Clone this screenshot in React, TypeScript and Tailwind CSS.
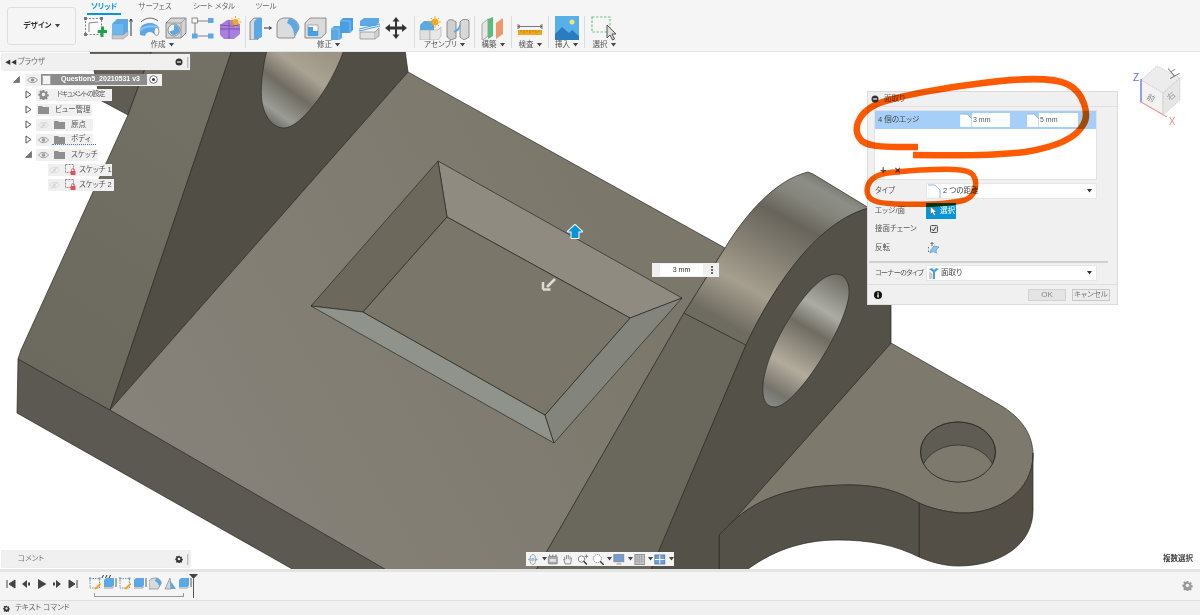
import React from "react";

const Caret = () => (
  <svg width="5" height="4" viewBox="0 0 5 4" className="inline-block ml-[3px] align-middle shrink-0">
    <path d="M0 0H5L2.5 3.5Z" fill="#444" />
  </svg>
);

const S = ({ children, w = 24, h = 24 }: { children: React.ReactNode; w?: number; h?: number }) => (
  <svg width={w} height={h} viewBox={`0 0 ${w} ${h}`} className="shrink-0">
    {children}
  </svg>
);

/* ---------- toolbar icons ---------- */
const ISketch = () => (
  <S>
    <rect x="2.5" y="2.5" width="16" height="16" fill="#fafafa" stroke="#666" strokeWidth="0.8" strokeDasharray="2 1.5" />
    <path d="M6 16V7L15 6" fill="none" stroke="#888" strokeWidth="1" />
    <rect x="1" y="1" width="3" height="3" fill="#777" />
    <rect x="17" y="1" width="3" height="3" fill="#777" />
    <rect x="1" y="17" width="3" height="3" fill="#777" />
    <path d="M16 14h3v-3.500h3V14h-.5h3.500v3h-3.500v4h-3v-4h-3z" fill="#1fa14a" transform="translate(-1 0)" />
  </S>
);
const IExtrude = () => (
  <S>
    <path d="M2 8L7 3H18V19L13 23H2Z" fill="#5aa9e6" />
    <path d="M2 8H13V23H2Z" fill="#6db7ef" />
    <path d="M2 19H13L18 15V19L13 23H2Z" fill="#c9c9c9" stroke="#888" strokeWidth="0.4" />
    <path d="M21 20V3M19.500 5.500L21 3L22.500 5.500" fill="none" stroke="#333" strokeWidth="1" />
  </S>
);
const IRevolve = () => (
  <S>
    <path d="M3 15C3 9 8 7 13 7C17 7 21 9 22 12L17 18C15 15 9 15 8 20L3 19Z" fill="#5aa9e6" />
    <path d="M3 15C6 10 17 9 22 12" fill="none" stroke="#8cc6f2" strokeWidth="2" />
    <ellipse cx="19.500" cy="15.500" rx="2.500" ry="4" fill="#f2f2f2" stroke="#777" strokeWidth="0.7" />
    <path d="M4 6C9 1 16 1 21 5" fill="none" stroke="#444" strokeWidth="0.8" />
  </S>
);
const IHole = () => (
  <S>
    <path d="M2 7L7 2H22V17L17 22H2Z" fill="#d4d4d4" stroke="#777" strokeWidth="0.8" />
    <path d="M2 7H17V22M17 7L22 2" fill="none" stroke="#888" strokeWidth="0.7" />
    <circle cx="10" cy="14" r="6" fill="#f4f4f4" stroke="#777" strokeWidth="0.8" />
    <path d="M10 14V9A5 5 0 1 1 5.500 15.500Z" fill="#5aa9e6" />
  </S>
);
const INodes = () => (
  <S>
    <path d="M4 5H20M4 5V20M4 20H20" fill="none" stroke="#777" strokeWidth="0.9" />
    <rect x="1" y="2" width="5.500" height="5" fill="#f5f5f5" stroke="#777" strokeWidth="0.8" />
    <rect x="17" y="2" width="5.500" height="5" fill="#5aa9e6" />
    <rect x="1" y="17.500" width="5.500" height="5" fill="#5aa9e6" />
    <rect x="17" y="17.500" width="5.500" height="5" fill="#5aa9e6" />
  </S>
);
const IPurple = () => (
  <S>
    <path d="M2 9L9 4H18L22 9V18L16 23H6L2 19Z" fill="#a87fdc" />
    <path d="M2 13H22M11 4V23M2 9L14 10L22 9" fill="none" stroke="#7d55b5" strokeWidth="1" />
    <circle cx="17.500" cy="6" r="3" fill="#f6a81c" />
    <path d="M17.500 0V2M17.500 10V12M11.500 6H13.500M21.500 6H23.500M13.500 2L15 3.500M20 8.500L21.500 10M13.500 10L15 8.500M20 3.500L21.500 2" stroke="#f6a81c" strokeWidth="1" />
  </S>
);
const IPress = () => (
  <S>
    <path d="M1 6L5 2H12V20L8 24H1Z" fill="#d9d9d9" stroke="#777" strokeWidth="0.8" />
    <path d="M5 6L8 2H13V21L9 23H5Z" fill="#5aa9e6" />
    <path d="M15 12H22M20 10.500L22.500 12L20 13.500" fill="none" stroke="#333" strokeWidth="1" />
  </S>
);
const IFillet = () => (
  <S>
    <path d="M1 21V9C1 5 4 2 9 2H14C20 3 23 8 23 12L18 22H3Z" fill="#dcdcdc" stroke="#777" strokeWidth="0.8" />
    <path d="M13 2C19 3 23 8 23 13L18 20C18 14 16 9 11 7Z" fill="#5aa9e6" />
  </S>
);
const IShell = () => (
  <S>
    <path d="M2 7L7 2H23V17L18 22H2Z" fill="#dadada" stroke="#777" strokeWidth="0.8" />
    <path d="M5 9H15V19H5Z" fill="#f6f6f6" stroke="#888" strokeWidth="0.6" />
    <path d="M5 11H10V15H15V20H5Z" fill="#4a9fe2" />
  </S>
);
const ICombine = () => (
  <S>
    <path d="M1 13L4 10H12V22L9 24H1Z" fill="#5aa9e6" />
    <path d="M10 5L13 2H23V14L20 17H10Z" fill="#4a9fe2" />
    <path d="M10 5H20V17" fill="none" stroke="#8cc6f2" strokeWidth="0.8" />
    <path d="M1 13H9V24" fill="none" stroke="#8cc6f2" strokeWidth="0.8" />
  </S>
);
const IOffset = () => (
  <S>
    <path d="M3 5L7 2H22V7L18 10H3Z" fill="#5aa9e6" />
    <path d="M2 13L23 8" stroke="#4a9fe2" strokeWidth="1" />
    <path d="M2 15L23 10" stroke="#4a9fe2" strokeWidth="1" />
    <path d="M3 16H18V23H3Z" fill="#e2e2e2" stroke="#888" strokeWidth="0.7" />
    <path d="M18 16L22 12V20L18 23" fill="#d0d0d0" stroke="#888" strokeWidth="0.7" />
  </S>
);
const IMove = () => (
  <S>
    <path d="M12 1L15.500 5.500H13V10.500H18V8L23 12L18 16V13.500H13V18.500H15.500L12 23L8.500 18.500H11V13.500H6V16L1 12L6 8V10.500H11V5.500H8.500Z" fill="#333" />
  </S>
);
const IAsmNew = () => (
  <S>
    <path d="M1 9L5 5H15V14H1Z" fill="#5aa9e6" />
    <path d="M1 14H11V24H1Z" fill="#e0e0e0" stroke="#999" strokeWidth="0.5" />
    <path d="M11 14H19L22 11V20L19 24H11Z" fill="#e8e8e8" stroke="#999" strokeWidth="0.5" />
    <circle cx="16" cy="6" r="3.500" fill="#f6a81c" />
    <path d="M16 0V2M16 10V12M10 6H12M20 6H22M12 2L13 3M19 9L20 10M12 10L13 9M19 3L20 2" stroke="#f6a81c" strokeWidth="1" />
  </S>
);
const IJoint = () => (
  <S>
    <path d="M1 7C1 4 4 3 7 4L10 6V22L5 24L1 21Z" fill="#cfcfcf" stroke="#777" strokeWidth="0.8" />
    <path d="M23 5C22 3 18 3 16 4L14 6V21L18 24L23 21Z" fill="#d8d8d8" stroke="#777" strokeWidth="0.8" />
    <path d="M8 16L13 12L14 9L12 14Z" fill="#5aa9e6" stroke="#5aa9e6" strokeWidth="1.500" />
  </S>
);
const IConstruct = () => (
  <S>
    <path d="M1 8L7 3V20L2 24H1Z" fill="#e5e5e5" stroke="#888" strokeWidth="0.7" />
    <path d="M7 3L12 1V20L7 23Z" fill="#5bbb7b" />
    <path d="M15 7L22 2V18L15 23Z" fill="#ec9a6a" />
  </S>
);
const IRuler = () => (
  <S w={26}>
    <path d="M1 8V13M25 8V13M1 10.500H25" fill="none" stroke="#555" strokeWidth="0.8" />
    <path d="M3 9L1 10.500L3 12M23 9L25 10.500L23 12" fill="none" stroke="#555" strokeWidth="0.8" />
    <rect x="1" y="14" width="24" height="5" fill="#f0a51d" />
    <path d="M4 14V16M7 14V17M10 14V16M13 14V17M16 14V16M19 14V17M22 14V16" stroke="#a06f10" strokeWidth="0.6" />
  </S>
);
const IPicture = () => (
  <S w={26} h={26}>
    <rect x="1" y="1" width="24" height="24" fill="#58b0e8" />
    <circle cx="18" cy="7" r="2.500" fill="#f6e27a" />
    <path d="M1 25V19L8 12L15 18L18 15L25 21V25Z" fill="#2a7cc0" />
  </S>
);
const ISelect = () => (
  <S w={26} h={26}>
    <rect x="1" y="2" width="18" height="15" fill="none" stroke="#6cc585" strokeWidth="1.200" strokeDasharray="2.500 1.500" />
    <path d="M16 10L16 23L19 20L21.500 25L23.500 24L21 19L25 19Z" fill="#ddd" stroke="#444" strokeWidth="0.9" />
  </S>
);

/* ---------- tree icons ---------- */
const Eye = ({ off }: { off?: boolean }) => (
  <svg width="11" height="8" viewBox="0 0 11 8" className="shrink-0">
    <path d="M0.500 4C3 0.500 8 0.500 10.500 4C8 7.500 3 7.500 0.500 4Z" fill="none" stroke={off ? "#dcdcdc" : "#9a9a9a"} strokeWidth="1" />
    <circle cx="5.500" cy="4" r="1.800" fill={off ? "#dcdcdc" : "#9a9a9a"} />
    {off && <path d="M2 7.500L9 0.500" stroke="#d0d0d0" strokeWidth="1" />}
  </svg>
);
const Folder = () => (
  <svg width="11" height="9" viewBox="0 0 11 9" className="shrink-0">
    <path d="M0 1H4L5 2H11V9H0Z" fill="#8f8f8f" />
  </svg>
);
const Expander = () => (
  <svg width="7" height="9" viewBox="0 0 7 9" className="shrink-0">
    <path d="M1 1L6 4.500L1 8Z" fill="#fff" stroke="#555" strokeWidth="1" />
  </svg>
);
const Corner = () => (
  <svg width="7" height="7" viewBox="0 0 7 7" className="shrink-0">
    <path d="M0.500 6.500L6.500 0.500V6.500Z" fill="#777" stroke="#555" strokeWidth="0.6" />
  </svg>
);
const SketchLock = () => (
  <svg width="11" height="11" viewBox="0 0 11 11" className="shrink-0">
    <rect x="0.500" y="0.500" width="8" height="8" fill="none" stroke="#666" strokeWidth="0.7" strokeDasharray="2 1" />
    <rect x="5.500" y="7" width="5" height="4" fill="#e0525a" />
    <path d="M6.500 7V6A1.500 1.500 0 0 1 9.500 6V7" fill="none" stroke="#e0525a" strokeWidth="0.7" />
  </svg>
);
const Gear = ({ c = "#8f8f8f", size = 11 }: { c?: string; size?: number }) => (
  <svg width={size} height={size} viewBox="0 0 24 24" className="shrink-0">
    <path
      d="M10 1h4l.7 3.200 2.300 1 2.800-1.800 2.800 2.800-1.800 2.800 1 2.300 3.200.7v4l-3.200.7-1 2.300 1.800 2.800-2.800 2.800-2.800-1.800-2.300 1-.7 3.200h-4l-.7-3.200-2.300-1-2.800 1.800-2.800-2.800 1.800-2.800-1-2.300L-1 14v-4l3.200-.7 1-2.300-1.800-2.800 2.800-2.800 2.800 1.800 2.300-1z"
      fill={c}
      transform="translate(1.500 1.500) scale(.88)"
    />
    <circle cx="12" cy="12" r="4" fill="#f0f0f0" />
  </svg>
);
const PanelDot = () => (
  <svg width="8" height="8" viewBox="0 0 8 8" className="shrink-0">
    <circle cx="4" cy="4" r="3.500" fill="#333" />
    <rect x="2" y="3.400" width="4" height="1.200" fill="#f0f0f0" />
  </svg>
);
const Grip = () => <div className="w-[2px] h-[11px] bg-[#bbb] border-r border-[#ddd] shrink-0" />;

/* ---------- timeline icons ---------- */
const TSketch = () => (
  <svg width="13" height="13" viewBox="0 0 13 13">
    <rect x="1" y="1.500" width="9.500" height="9.500" fill="none" stroke="#666" strokeWidth="0.7" strokeDasharray="1.500 1" />
    <rect x="0" y="0.500" width="2" height="2" fill="#5aa9e6" />
    <rect x="9.500" y="0.500" width="2" height="2" fill="#5aa9e6" />
    <path d="M5 12L11 6L12.500 7L7 12.500Z" fill="#f0a51d" />
  </svg>
);
const TExtrude = () => (
  <svg width="13" height="13" viewBox="0 0 13 13">
    <path d="M0 3L2 1H10V10L8 12H0Z" fill="#5aa9e6" />
    <path d="M0 10H8L10 8V10L8 12H0Z" fill="#c9c9c9" />
    <path d="M12 10V1" stroke="#333" strokeWidth="0.8" />
  </svg>
);
const TFillet = () => (
  <svg width="13" height="13" viewBox="0 0 13 13">
    <path d="M0 12V5C0 3 2 1 5 1H8C11 2 13 5 12 7L9 12Z" fill="#d9d9d9" stroke="#777" strokeWidth="0.6" />
    <path d="M7 1C10 2 13 4 12 7L10 10C10 7 8 5 6 4Z" fill="#5aa9e6" />
  </svg>
);
const TDraft = () => (
  <svg width="13" height="13" viewBox="0 0 13 13">
    <path d="M1 12L6 1L7 12Z" fill="#d5d5d5" stroke="#777" strokeWidth="0.6" />
    <path d="M7 12L6 3L12 12Z" fill="#5aa9e6" />
  </svg>
);

/* ---------- small UI ---------- */
const ChamferGlyph = () => (
  <svg width="13" height="14" viewBox="0 0 13 14" className="shrink-0">
    <path d="M0 1H7L12 6V14H0Z" fill="#fff" stroke="#e4e4e4" strokeWidth="0.5" />
    <path d="M0 1H7L12 6V14" fill="none" stroke="#6fa3d8" strokeWidth="0.7" />
  </svg>
);

const Tool = ({ children }: { children: React.ReactNode }) => (
  <div className="w-[27px] h-[26px] flex items-center justify-center shrink-0">{children}</div>
);

const Group = ({
  label,
  children,
  className,
}: {
  label: string;
  children: React.ReactNode;
  className: string;
}) => (
  <div className={`flex flex-col items-center border-r border-[#dcdcdc] h-[32px] ${className}`}>
    <div className="flex h-[24px] items-center">{children}</div>
    <div className="text-[7.5px] leading-[10px] text-[#555] whitespace-nowrap">
      {label}
      <Caret />
    </div>
  </div>
);

export default function App() {
  return (
    <div className="w-[1200px] h-[615px] flex flex-col overflow-hidden bg-white font-['Liberation_Sans','Noto_Sans_CJK_JP',sans-serif] [font-feature-settings:'palt']">
      {/* ribbon */}
      <header className="h-[52px] shrink-0 bg-[#f5f5f5] border-b border-[#e4e4e4] flex">
        <div className="ml-[7px] mt-[7px] w-[69px] h-[38px] rounded-[3px] border border-[#dedede] flex items-center justify-center text-[7.5px] font-bold text-[#333] shrink-0">
          デザイン
          <Caret />
        </div>
        <div className="flex flex-col ml-[8px]">
          <nav className="h-[16px] flex text-[7.5px] leading-[12px] text-[#666] pt-[1px]">
            <div className="w-[34px] h-[14px] text-center text-[#0696d7] font-bold border-b-[2px] border-[#0696d7] ml-[3px]">ソリッド</div>
            <div className="w-[50px] ml-[9px] text-center">サーフェス</div>
            <div className="w-[50px] ml-[9px] text-center">シート メタル</div>
            <div className="w-[30px] ml-[12px] text-center">ツール</div>
          </nav>
          <div className="flex">
            <Group label="作成" className="w-[162px] pr-[5px]">
              <Tool><ISketch /></Tool>
              <Tool><IExtrude /></Tool>
              <Tool><IRevolve /></Tool>
              <Tool><IHole /></Tool>
              <Tool><INodes /></Tool>
              <Tool><IPurple /></Tool>
            </Group>
            <Group label="修正" className="w-[169px] pr-[3px]">
              <Tool><IPress /></Tool>
              <Tool><IFillet /></Tool>
              <Tool><IShell /></Tool>
              <Tool><ICombine /></Tool>
              <Tool><IOffset /></Tool>
              <Tool><IMove /></Tool>
            </Group>
            <Group label="アセンブリ" className="w-[60px]">
              <Tool><IAsmNew /></Tool>
              <Tool><IJoint /></Tool>
            </Group>
            <Group label="構築" className="w-[37px]">
              <Tool><IConstruct /></Tool>
            </Group>
            <Group label="検査" className="w-[37px]">
              <Tool><IRuler /></Tool>
            </Group>
            <Group label="挿入" className="w-[36px]">
              <Tool><IPicture /></Tool>
            </Group>
            <Group label="選択" className="w-[38px] border-r-0">
              <Tool><ISelect /></Tool>
            </Group>
          </div>
        </div>
      </header>

      {/* canvas */}
      <main className="relative flex-1 overflow-hidden bg-white">
        <svg className="absolute inset-0 w-full h-full" viewBox="0 52 1200 517" preserveAspectRatio="none">
          <defs>
            <linearGradient id="band" gradientUnits="userSpaceOnUse" x1="825" y1="172" x2="740" y2="330">
              <stop offset="0" stopColor="#6e6b60" />
              <stop offset=".1" stopColor="#8d8f87" />
              <stop offset=".2" stopColor="#84847b" />
              <stop offset=".33" stopColor="#67645b" />
              <stop offset=".58" stopColor="#8a8477" />
              <stop offset=".77" stopColor="#a69f90" />
              <stop offset="1" stopColor="#6e6b60" />
            </linearGradient>
            <linearGradient id="lugHole" gradientUnits="userSpaceOnUse" x1="850" y1="275" x2="770" y2="410">
              <stop offset="0" stopColor="#66635a" />
              <stop offset=".28" stopColor="#abaca4" />
              <stop offset=".43" stopColor="#6f6c62" />
              <stop offset=".7" stopColor="#b3ac9d" />
              <stop offset=".88" stopColor="#75736b" />
              <stop offset="1" stopColor="#8a928e" />
            </linearGradient>
            <linearGradient id="topHole" gradientUnits="userSpaceOnUse" x1="325" y1="52" x2="270" y2="128">
              <stop offset="0" stopColor="#9c9485" />
              <stop offset=".3" stopColor="#aaa293" />
              <stop offset=".55" stopColor="#6f6c62" />
              <stop offset=".82" stopColor="#9a9c95" />
              <stop offset="1" stopColor="#5f5d55" />
            </linearGradient>
            <linearGradient id="plate" gradientUnits="userSpaceOnUse" x1="150" y1="450" x2="600" y2="200">
              <stop offset="0" stopColor="#86827a" />
              <stop offset="1" stopColor="#7b786b" />
            </linearGradient>
            <linearGradient id="gusset" gradientUnits="userSpaceOnUse" x1="20" y1="350" x2="220" y2="60">
              <stop offset="0" stopColor="#6c695f" />
              <stop offset="1" stopColor="#737065" />
            </linearGradient>
            <clipPath id="smallHole">
              <ellipse cx="958" cy="452" rx="37.500" ry="30" />
            </clipPath>
          </defs>
          <g stroke="#2a2924" strokeWidth="0.7" strokeLinejoin="round">
            <path d="M18 359L110 410L390 570H294L17 413Z" fill="#5b5951" />
            <path d="M90 50L100 100L128 115L152 50Z" fill="#5f5c53" />
            <path d="M152 50L128 115L21 350L18 359L110 410L232 50Z" fill="url(#gusset)" />
            <path d="M232 50L110 410L408 72L405 50Z" fill="#514e46" />
            <path d="M267 50C262 70 260 90 262 102C265 120 275 128 284 128C300 128 330 90 344 50Z" fill="url(#topHole)" />
            <path d="M408 72L725 248L684 313L535 572H390L110 410Z" fill="url(#plate)" />
            <path d="M438 161L682 298L630 318L447 217Z" fill="#8f8b80" />
            <path d="M438 161L447 217L363 312L311 306Z" fill="#6c695c" />
            <path d="M311 306L363 312L545 415L554 443Z" fill="#90938b" />
            <path d="M682 298L554 443L545 415L630 318Z" fill="#83847b" />
            <path d="M447 217L630 318L545 415L363 312Z" fill="#7a7669" />
            <path d="M684 313L746 345L650 572H535Z" fill="#6a675d" />
            <path d="M891 343L1000 405C1022 418 1033 435 1033 455C1033 490 1000 514 961 513C945 512 930 508 919 503C900 492 880 485 850 485C800 485 760 495 731 523Z" fill="#7d796d" />
            <path d="M1033 453V510C1033 545 1000 566 958 566C945 566 930 562 919 557V503C930 508 945 512 961 513C1000 514 1033 490 1033 455Z" fill="#534f47" />
            <path d="M731 523C760 495 800 485 850 485C880 485 900 492 919 503V557C895 545 870 540 838 540C800 540 770 552 744 572H719V535Z" fill="#545148" />
            <ellipse cx="958" cy="452" rx="37.500" ry="30" fill="#5f5c54" />
            <ellipse cx="958" cy="476" rx="37.500" ry="31" fill="#7d796d" clipPath="url(#smallHole)" />
            <ellipse cx="958" cy="452" rx="37.500" ry="30" fill="none" />
            <path d="M725 248C745 215 775 180 808 172L813 174L869 208C830 218 785 262 746 345L684 313Z" fill="url(#band)" />
            <path d="M746 345C785 262 830 218 869 208L891 215V343L731 523L719 535V572H650Z" fill="#545148" />
            <path d="M836 274C845 274 850 282 849 295C845 330 795 407 775 407C765 407 762 398 763 385C765 350 810 274 836 274Z" fill="url(#lugHole)" />
          </g>
          <path d="M575 225L582 231.500H578.500V238H571.500V231.500H568Z" fill="#0696d7" stroke="#fff" strokeWidth="2" paintOrder="stroke" strokeLinejoin="round" />
          <path d="M555 279L547 287M543 289.500V282M543 289.500H550.500" fill="none" stroke="#dcdcdc" strokeWidth="2.500" />
        </svg>

        {/* browser panel */}
        <section className="absolute left-[2px] top-[2px] w-[188px] h-[16px] bg-[#f0f0f0] shadow-[0_0_1px_#999] flex items-center pl-[3px] pr-[1px] text-[7.5px] text-[#666]">
          <span className="text-[6px] text-[#333] w-[13px]">◀◀</span>
          <span>ブラウザ</span>
          <span className="ml-auto mr-[4px]"><PanelDot /></span>
          <Grip />
        </section>

        {/* tree */}
        <div className="absolute left-[13px] top-[20px] flex flex-col text-[7.5px] text-[#555]">
          <div className="h-[15px] flex items-center">
            <Corner />
            <div className="ml-[5px] h-[12px] w-[137px] bg-[#f0f0f0] flex items-center pl-[2px]">
              <Eye />
              <div className="ml-[3px] h-[11px] w-[106px] bg-[#8c8c8c] flex items-center">
                <div className="w-[9px] h-[10px] bg-[#f4f4f4] border border-[#aaa] ml-[1px]" />
                <span className="ml-[10px] text-white font-bold text-[7px] whitespace-nowrap">Question5_20210531 v3</span>
              </div>
              <svg width="9" height="9" viewBox="0 0 9 9" className="ml-[2px]">
                <circle cx="4.500" cy="4.500" r="3.800" fill="#fff" stroke="#444" strokeWidth="0.7" />
                <circle cx="4.500" cy="4.500" r="1.500" fill="#333" />
              </svg>
            </div>
          </div>
          <div className="h-[15px] flex items-center pl-[12px]">
            <Expander />
            <div className="ml-[4px] h-[12px] w-[76px] bg-[#f0f0f0] flex items-center pl-[2px]">
              <Gear />
              <span className="ml-[8px] whitespace-nowrap text-[7px] tracking-[-1px]">ドキュメントの設定</span>
            </div>
          </div>
          <div className="h-[15px] flex items-center pl-[12px]">
            <Expander />
            <div className="ml-[4px] h-[12px] w-[56px] bg-[#f0f0f0] flex items-center pl-[2px]">
              <Folder />
              <span className="ml-[6px] whitespace-nowrap">ビュー管理</span>
            </div>
          </div>
          <div className="h-[15px] flex items-center pl-[12px]">
            <Expander />
            <div className="ml-[4px] h-[12px] w-[57px] bg-[#f0f0f0] flex items-center pl-[2px]">
              <Eye off />
              <span className="ml-[5px]"><Folder /></span>
              <span className="ml-[6px] whitespace-nowrap">原点</span>
            </div>
          </div>
          <div className="h-[15px] flex items-center pl-[12px]">
            <Expander />
            <div className="ml-[4px] h-[12px] w-[57px] bg-[#f0f0f0] flex items-center pl-[2px]">
              <Eye />
              <span className="ml-[3px] pl-[2px] pr-[5px] flex items-center border-b border-dotted border-[#4a78c8] h-[11px]">
                <Folder />
                <span className="ml-[6px] whitespace-nowrap">ボディ</span>
              </span>
            </div>
          </div>
          <div className="h-[15px] flex items-center pl-[12px]">
            <Corner />
            <div className="ml-[4px] h-[12px] w-[62px] bg-[#f0f0f0] flex items-center pl-[2px]">
              <Eye />
              <span className="ml-[5px]"><Folder /></span>
              <span className="ml-[6px] whitespace-nowrap">スケッチ</span>
            </div>
          </div>
          <div className="h-[15px] flex items-center pl-[35px]">
            <div className="h-[12px] w-[64px] bg-[#f0f0f0] flex items-center pl-[1px]">
              <Eye off />
              <span className="ml-[5px]"><SketchLock /></span>
              <span className="ml-[3px] whitespace-nowrap">スケッチ 1</span>
            </div>
          </div>
          <div className="h-[15px] flex items-center pl-[35px]">
            <div className="h-[12px] w-[66px] bg-[#f0f0f0] flex items-center pl-[1px]">
              <Eye off />
              <span className="ml-[5px]"><SketchLock /></span>
              <span className="ml-[3px] whitespace-nowrap">スケッチ 2</span>
            </div>
          </div>
        </div>

        {/* comment panel */}
        <section className="absolute left-[2px] bottom-[2px] w-[188px] h-[16px] bg-[#f0f0f0] shadow-[0_0_1px_#999] flex items-center pl-[16px] pr-[1px] text-[7.5px] text-[#777]">
          <span>コメント</span>
          <span className="ml-auto mr-[4px]"><Gear c="#333" size={8} /></span>
          <Grip />
        </section>

        {/* dimension box */}
        <div className="absolute left-[652px] top-[211px] w-[67px] h-[14px] bg-[#f0f0f0] flex items-center">
          <div className="ml-[8px] w-[43px] h-[12px] bg-white text-[7px] leading-[12px] text-center text-[#333]">3 mm</div>
          <div className="ml-[8px] flex flex-col gap-[1.500px]">
            <div className="w-[1.500px] h-[1.500px] bg-[#666]" />
            <div className="w-[1.500px] h-[1.500px] bg-[#666]" />
            <div className="w-[1.500px] h-[1.500px] bg-[#666]" />
          </div>
        </div>

        {/* chamfer dialog */}
        <section className="absolute left-[867px] top-[39px] w-[251px] h-[214px] bg-[#f0f0f0] border border-[#dcdcdc] flex flex-col text-[7.5px] text-[#555]">
          <div className="h-[15px] border-b border-[#e0e0e0] flex items-center pl-[3px] gap-[5px] shrink-0">
            <PanelDot />
            <span className="text-[#666]">面取り</span>
          </div>
          <div className="ml-[6px] mt-[3px] w-[223px] h-[70px] bg-white border border-[#e2e2e2] flex flex-col shrink-0">
            <div className="h-[18px] bg-[#a5cff9] flex items-center pl-[3px] shrink-0">
              <span className="w-[82px] text-[#444]">4 個のエッジ</span>
              <ChamferGlyph />
              <div className="ml-[-1px] w-[38px] h-[14px] bg-white text-[7px] leading-[14px] pl-[1px]">3 mm</div>
              <div className="ml-[17px]"><ChamferGlyph /></div>
              <div className="ml-[-1px] w-[39px] h-[14px] bg-white text-[7px] leading-[14px] pl-[1px]">5 mm</div>
            </div>
            <div className="mt-auto mb-[3px] ml-[5px] flex gap-[8px] text-[11px] leading-[11px] text-[#555] font-bold">
              <span>+</span>
              <span>×</span>
            </div>
          </div>
          <div className="mt-[3px] h-[16px] flex items-center pl-[7px] shrink-0">
            <span className="w-[51px]">タイプ</span>
            <div className="w-[171px] h-[16px] bg-white border border-[#e6e6e6] flex items-center pl-[1px] pr-[4px]">
              <ChamferGlyph />
              <span className="ml-[2px] text-[#444]">2 つの距離</span>
              <svg width="5" height="4" viewBox="0 0 5 4" className="ml-auto"><path d="M0 0H5L2.500 3.500Z" fill="#333" /></svg>
            </div>
          </div>
          <div className="mt-[4px] h-[16px] flex items-center pl-[7px] shrink-0">
            <span className="w-[51px]">エッジ/面</span>
            <div className="w-[30px] h-[16px] bg-[#0696d7] flex items-center pl-[4px] gap-[3px] text-white">
              <svg width="7" height="10" viewBox="0 0 7 10"><path d="M0.500 0.500V8L2.500 6.500L4 9.500L5.500 9L4.200 6H6.500Z" fill="#fff" stroke="#555" strokeWidth="0.5" /></svg>
              <span>選択</span>
            </div>
          </div>
          <div className="mt-[2px] h-[16px] flex items-center pl-[7px] shrink-0">
            <span className="w-[55px]">接面チェーン</span>
            <div className="w-[8px] h-[8px] rounded-[1.500px] border border-[#555] bg-[#e4e4e4] flex items-center justify-center">
              <svg width="6" height="6" viewBox="0 0 6 6"><path d="M0.800 3L2.400 4.800L5.200 0.800" fill="none" stroke="#333" strokeWidth="1" /></svg>
            </div>
          </div>
          <div className="mt-[3px] h-[16px] flex items-center pl-[7px] shrink-0">
            <span className="w-[53px]">反転</span>
            <svg width="11" height="12" viewBox="0 0 11 12">
              <path d="M6 4L11 5L8 8L8.500 11L5 9.500L2 11L3 7.500Z" fill="#8cc6f2" stroke="#2a7cc0" strokeWidth="0.5" />
              <path d="M4 0.500V4M2.500 2L4 0.500L5.500 2M1 5A3 3 0 0 0 1 10" fill="none" stroke="#444" strokeWidth="0.8" />
            </svg>
          </div>
          <div className="mt-[5px] ml-[1px] w-[239px] h-[2px] bg-[#d0d0d0] shrink-0" />
          <div className="mt-[2px] h-[16px] flex items-center pl-[7px] shrink-0">
            <span className="w-[51px] whitespace-nowrap text-[7px] tracking-[-0.5px]">コーナーのタイプ</span>
            <div className="w-[171px] h-[16px] bg-white border border-[#e6e6e6] flex items-center pl-[2px] pr-[4px]">
              <svg width="10" height="11" viewBox="0 0 10 11"><path d="M0 1L4 4V11H6V4L10 1L7 0L5 2L3 0Z" fill="#4a9fe2" /><path d="M0 3L3.500 6V11H0Z" fill="#ccc" /></svg>
              <span className="ml-[2px] text-[#444]">面取り</span>
              <svg width="5" height="4" viewBox="0 0 5 4" className="ml-auto"><path d="M0 0H5L2.500 3.500Z" fill="#333" /></svg>
            </div>
          </div>
          <div className="mt-[3px] border-t border-[#dedede] flex-1 flex items-center pl-[6px] pr-[7px]">
            <svg width="8" height="8" viewBox="0 0 8 8">
              <circle cx="4" cy="4" r="4" fill="#111" />
              <rect x="3.300" y="3.300" width="1.400" height="3.200" fill="#fff" />
              <rect x="3.300" y="1.400" width="1.400" height="1.300" fill="#fff" />
            </svg>
            <div className="ml-auto w-[38px] h-[12px] bg-[#e4e4e4] border border-[#d2d2d2] text-[8px] leading-[10px] text-center text-[#888]">OK</div>
            <div className="ml-[6px] w-[38px] h-[12px] bg-[#ececec] border border-[#c8c8c8] leading-[10px] text-center text-[#777] whitespace-nowrap">キャンセル</div>
          </div>
        </section>

        {/* view cube */}
        <svg className="absolute left-[1130px] top-[8px]" width="60" height="70" viewBox="1130 60 60 70">
          <g stroke="#b9b9b9" strokeWidth="0.6" strokeDasharray="1.500 1">
            <path d="M1157 66L1180 78L1163 93L1141 80Z" fill="#ececec" />
            <path d="M1141 80L1163 93V115L1141 102Z" fill="#f2f2f2" />
            <path d="M1163 93L1180 78V100L1163 115Z" fill="#e6e6e6" />
          </g>
          <text x="1160" y="84" fontSize="12" textAnchor="middle" fill="#777" transform="rotate(-30 1160 80) skewX(10)">上</text>
          <text x="1151" y="101" fontSize="8" textAnchor="middle" fill="#888" transform="rotate(28 1151 98)">前</text>
          <text x="1171" y="99" fontSize="8" textAnchor="middle" fill="#999" transform="rotate(-42 1171 96)">右</text>
          <path d="M1141 102V79" stroke="#5a6fe0" strokeWidth="1.200" />
          <path d="M1141 102L1167 117" stroke="#ee9a9a" strokeWidth="1.200" />
          <text x="1136" y="81" fontSize="10" textAnchor="middle" fill="#5a6fe0">Z</text>
          <text x="1172" y="125" fontSize="10" textAnchor="middle" fill="#ee8a8a">X</text>
        </svg>

        {/* nav bar */}
        <div className="absolute left-[526px] top-[500px] w-[148px] h-[14px] bg-[#f4f4f4] flex items-center pl-[1px]">
          <svg width="13" height="13" viewBox="0 0 13 13"><ellipse cx="6.500" cy="6.500" rx="3" ry="5.500" fill="none" stroke="#999" /><circle cx="6.500" cy="6.500" r="2" fill="#8cc6f2" /><path d="M1 6.500L3 5V8ZM12 6.500L10 5V8Z" fill="#999" /></svg>
          <Caret />
          <svg width="13" height="13" viewBox="0 0 13 13" className="ml-[0px]"><rect x="1.500" y="3" width="10" height="8.500" rx="1" fill="#aaa" stroke="#666" strokeWidth="0.6" /><rect x="3" y="6" width="7" height="3" fill="#e4e4e4" /><path d="M3 1V3M6.500 1V3M10 1V3" stroke="#666" /></svg>
          <svg width="13" height="13" viewBox="0 0 13 13" className="ml-[4px]"><path d="M3 7V3.500M5 6V1.500M7 6V1.500M9 6.500V3M3 7L2 6L3.500 11.500H9.500L10.500 6.500V4.500" fill="#eee" stroke="#666" strokeWidth="0.8" /></svg>
          <svg width="13" height="13" viewBox="0 0 13 13" className="ml-[3px]"><circle cx="5" cy="6" r="3.500" fill="#fff" stroke="#777" /><path d="M7.500 8.500L11 12" stroke="#333" strokeWidth="1.500" /><path d="M10.500 1V5M8.500 3H12.500" stroke="#777" /></svg>
          <svg width="14" height="13" viewBox="0 0 14 13" className="ml-[3px]"><circle cx="6" cy="5.500" r="4.500" fill="#fff" stroke="#777" strokeDasharray="1.500 1" /><path d="M9 8.500L13 12.500" stroke="#333" strokeWidth="1.500" /></svg>
          <Caret />
          <svg width="13" height="13" viewBox="0 0 13 13" className="ml-[1px]"><rect x="1" y="1" width="11" height="8" fill="#6f9fd6" stroke="#888" /><path d="M4.500 10H8.500L9.500 12.500H3.500Z" fill="#bbb" /></svg>
          <Caret />
          <svg width="13" height="13" viewBox="0 0 13 13" className="ml-[1px]"><rect x="1" y="1" width="11" height="11" fill="#ccc" stroke="#888" /><path d="M1 3.500H12M1 6H12M1 8.500H12M3.500 1V12M6 1V12M8.500 1V12" stroke="#888" strokeWidth="0.5" /></svg>
          <Caret />
          <svg width="13" height="13" viewBox="0 0 13 13" className="ml-[1px]"><rect x="1" y="1.500" width="11" height="10" fill="#6f9fd6" stroke="#5577a0" /><path d="M6.500 1.500V11.500M1 6.500H12" stroke="#fff" /></svg>
          <Caret />
        </div>

        <div className="absolute right-[7px] bottom-[5px] text-[7.5px] font-bold text-[#444]">複数選択</div>

        {/* orange hand-drawn annotation */}
        <svg className="absolute inset-0 w-full h-full mix-blend-multiply pointer-events-none" viewBox="0 52 1200 517" preserveAspectRatio="none">
          <g fill="none" stroke="#ff5a00" strokeLinejoin="round">
            <path strokeWidth="6.500" d="M918 147C895 147 870 148 862 141C852 131 856 114 877 104C900 95 950 87 983 83C1015 79 1050 76 1067 84C1084 92 1090 115 1083 125C1075 140 1050 148 1025 152C985 157 945 155 913 155" />
            <path strokeWidth="5.500" d="M900 172C880 172 868 178 867 190C867 200 875 203 895 204C925 205 950 204 965 200C976 196 978 182 973 175C968 168 945 169 920 170C905 171 895 172 888 173" />
          </g>
        </svg>
      </main>

      {/* timeline */}
      <footer className="h-[31px] shrink-0 bg-[#f5f5f5] border-t-[3px] border-[#e4e4e4] flex items-start">
        <div className="ml-[6px] mt-[7px] flex items-center gap-[5px]">
          <svg width="10" height="10" viewBox="0 0 10 10"><path d="M1 1V9M9 1V9L3 5Z" fill="#444" stroke="#444" /></svg>
          <svg width="10" height="10" viewBox="0 0 10 10"><path d="M6 1V9L1 5Z M7 3.500H9V6.500H7Z" fill="#444" /></svg>
          <svg width="10" height="10" viewBox="0 0 10 10" className="ml-[1px]"><path d="M1 0V10L9.500 5Z" fill="#444" /></svg>
          <svg width="10" height="10" viewBox="0 0 10 10"><path d="M4 1V9L9 5Z M1 3.500H3V6.500H1Z" fill="#444" /></svg>
          <svg width="10" height="10" viewBox="0 0 10 10" className="ml-[1px]"><path d="M9 1V9M1 1V9L7 5Z" fill="#444" stroke="#444" /></svg>
        </div>
        <div className="ml-[11px] mt-[3px] flex flex-col">
          <svg width="12" height="3" viewBox="0 0 12 3" className="ml-[12px] -mb-[1px]"><path d="M1 3L2.500 0M4.500 3L6 0M8 3L9.500 0" stroke="#333" strokeWidth="1" /></svg>
          <div className="flex gap-[2px]">
            <TSketch /><TExtrude /><TSketch /><TExtrude /><TFillet /><TDraft /><TExtrude />
          </div>
          <div className="ml-[5px] mt-[3px] w-[90px] h-[4px] border-x border-b border-[#999]" />
        </div>
        <div className="ml-[-3px] mt-[2px] flex flex-col items-center">
          <svg width="9" height="5" viewBox="0 0 9 5"><path d="M0 0H9L4.500 5Z" fill="#444" /></svg>
          <div className="w-[1.500px] h-[19px] bg-[#555]" />
        </div>
        <div className="ml-auto mr-[7px] mt-[8px]"><Gear c="#9a9a9a" size={11} /></div>
      </footer>

      {/* text command */}
      <div className="h-[15px] shrink-0 bg-[#f0f0f0] border-t border-[#dedede] flex items-center pl-[3px] gap-[4px] text-[7.5px] text-[#666]">
        <Gear c="#333" size={7} />
        <span className="ml-[1px]">テキスト コマンド</span>
      </div>
    </div>
  );
}
